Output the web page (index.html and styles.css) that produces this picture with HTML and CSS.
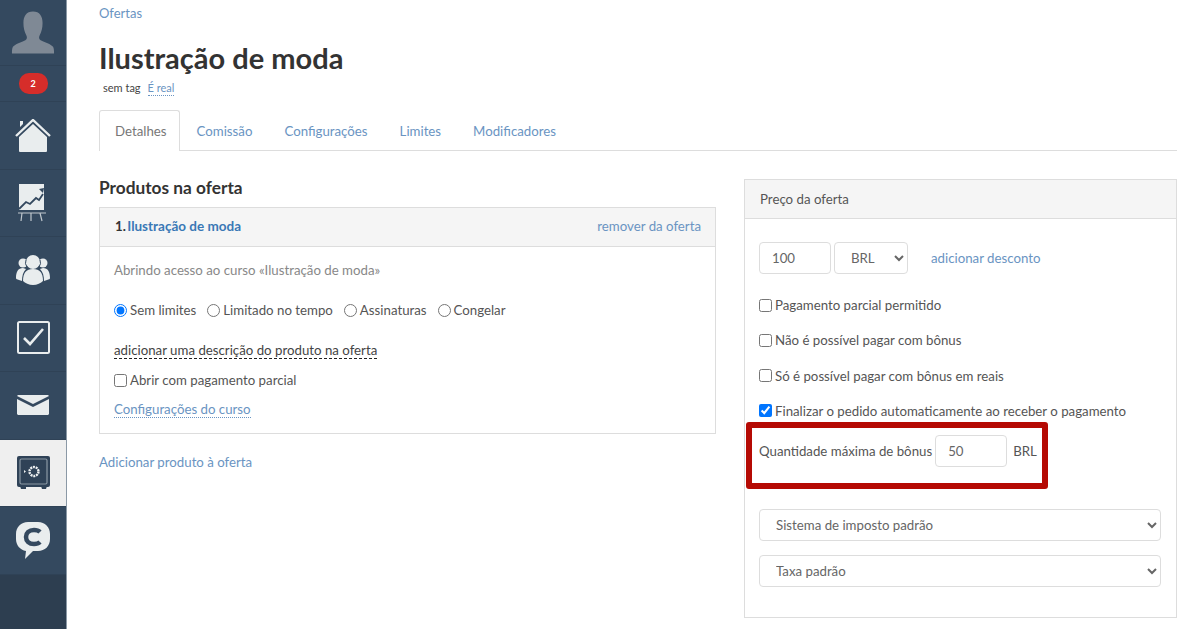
FILE: index.html
```html
<!DOCTYPE html>
<html lang="pt">
<head>
  <meta charset="UTF-8" />
  <meta name="viewport" content="width=device-width, initial-scale=1.0"/>
  <title>Ilustração de moda</title>
  <link rel="stylesheet" href="styles.css">
</head>
<body>

  <nav class="sidebar">
    <a class="side-item side-avatar">
      <svg width="44" height="43" viewBox="0 0 46 44"><path fill="#7f8995" d="M23 0c7 0 10 5 10 12 0 5-1 9-3 13-1 2-1 4 1 5 4 2 11 4 13 7 1 2 1 5 1 7H1c0-2 0-5 1-7 2-3 9-5 13-7 2-1 2-3 1-5-2-4-3-8-3-13C13 5 16 0 23 0z"/></svg>
    </a>
    <a class="side-item side-badge"><span class="badge">2</span></a>
    <a class="side-item">
      <svg width="36" height="33" viewBox="0 0 36 33"><path fill="#e9edee" d="M5 2h3v3L5 8zM18 5 32 18v14a1 1 0 0 1-1 1H5a1 1 0 0 1-1-1V18z"/><path fill="none" stroke="#e9edee" stroke-width="2.4" d="M1 17 18 1l17 16"/></svg>
    </a>
    <a class="side-item">
      <svg width="30" height="38" viewBox="0 0 30 38"><path fill="#e9edee" d="M1 0h25v26H1z"/><path fill="none" stroke="#34495f" stroke-width="1.8" d="M1 25l7-7 4 2 6-6 3 2 4-6"/><path fill="#34495f" d="M21 5l5-1-1 5z"/><path fill="none" stroke="#bfc7cd" stroke-width="1.2" d="M0 29h28M4 29l-1 8M13 29v8M22 29l2 8"/></svg>
    </a>
    <a class="side-item">
      <svg width="34" height="30" viewBox="0 0 34 30"><g fill="#e9edee"><circle cx="7" cy="8" r="4.5"/><circle cx="27" cy="8" r="4.5"/><path d="M0 23c0-6 2-10 7-10l3 1c-3 3-4 7-4 12l-3-1c-2-.5-3-1-3-2zM34 23c0-6-2-10-7-10l-3 1c3 3 4 7 4 12l3-1c2-.5 3-1 3-2z"/><circle cx="17" cy="7" r="7"/><path d="M7 26c0-8 3-12 10-12s10 4 10 12c-2 2-6 4-10 4s-8-2-10-4z"/></g><path fill="none" stroke="#34495f" stroke-width="1" d="M10 5a7 7 0 0 0 1 7M24 5a7 7 0 0 1-1 7"/></svg>
    </a>
    <a class="side-item">
      <svg width="33" height="33" viewBox="0 0 33 33"><rect x="1" y="1" width="31" height="31" rx="1.5" fill="none" stroke="#e9edee" stroke-width="2"/><path fill="none" stroke="#e9edee" stroke-width="2.6" d="M7 17l6 6L26 8"/></svg>
    </a>
    <a class="side-item">
      <svg width="32" height="20" viewBox="0 0 32 20"><path fill="#e9edee" d="M0 1 1 0h30l1 1-16 8zM0 4l16 8 16-8v15l-1 1H1l-1-1z"/></svg>
    </a>
    <a class="side-item side-active">
      <svg width="33" height="33" viewBox="0 0 33 33"><rect y="0" width="33" height="31" rx="2" fill="#2f4257"/><path fill="#2f4257" d="M3 30h6v3H4zM24 30h6l-1 3h-4z"/><rect x="3" y="3" width="27" height="25" rx="1.5" fill="none" stroke="#8b98a4" stroke-width="1.2"/><circle cx="17" cy="15.5" r="4.5" fill="none" stroke="#eef0f1" stroke-width="2.4" stroke-dasharray="2 .8"/><path fill="#eef0f1" d="M7 14l2 1.5-2 1.5z"/></svg>
    </a>
    <a class="side-item">
      <svg width="34" height="37" viewBox="0 0 34 37"><path fill="#e9edee" d="M12 0h10c7 0 12 5 12 12v5c0 7-5 12-12 12h-5l-8 8 1-8c-6-1-10-6-10-12V12C0 5 5 0 12 0z"/><path fill="none" stroke="#34495f" stroke-width="4.5" d="M24 10c-1-1-3-2-6-2-5 0-8 3-8 7s3 7 8 7c3 0 5-1 6-2"/></svg>
    </a>
  </nav>

  <main class="content">
    <a class="crumb">Ofertas</a>
    <h1>Ilustração de moda</h1>
    <div class="tags">
      <span class="tag-none">sem tag</span>
      <a class="tag-real">É real</a>
    </div>

    <div class="tabs">
      <a class="tab active">Detalhes</a>
      <a class="tab">Comissão</a>
      <a class="tab">Configurações</a>
      <a class="tab">Limites</a>
      <a class="tab">Modificadores</a>
    </div>

    <div class="columns">
      <section class="col-left">
        <h2>Produtos na oferta</h2>
        <div class="panel">
          <div class="panel-head product-head">
            <span><b>1.</b> <a class="product-name">Ilustração de moda</a></span>
            <a class="link">remover da oferta</a>
          </div>
          <div class="product-body">
            <p class="muted">Abrindo acesso ao curso «Ilustração de moda»</p>
            <div class="radios">
              <label><input type="radio" name="limit" checked>Sem limites</label>
              <label><input type="radio" name="limit">Limitado no tempo</label>
              <label><input type="radio" name="limit">Assinaturas</label>
              <label><input type="radio" name="limit">Congelar</label>
            </div>
            <a class="add-desc">adicionar uma descrição do produto na oferta</a>
            <label class="check check-partial"><input type="checkbox">Abrir com pagamento parcial</label>
            <a class="link course-link">Configurações do curso</a>
          </div>
        </div>
        <a class="link add-product">Adicionar produto à oferta</a>
      </section>

      <aside class="panel price-panel">
        <div class="panel-head">Preço da oferta</div>
        <div class="price-body">
          <div class="price-row">
            <input class="field field-small" type="text" value="100">
            <select class="field field-currency"><option>BRL</option></select>
            <a class="link discount">adicionar desconto</a>
          </div>
          <label class="check"><input type="checkbox">Pagamento parcial permitido</label>
          <label class="check"><input type="checkbox">Não é possível pagar com bônus</label>
          <label class="check"><input type="checkbox">Só é possível pagar com bônus em reais</label>
          <label class="check"><input type="checkbox" checked>Finalizar o pedido automaticamente ao receber o pagamento</label>
          <div class="bonus-row">
            <span>Quantidade máxima de bônus</span>
            <input class="field field-small" type="text" value="50">
            <span class="bonus-cur">BRL</span>
          </div>
          <select class="field field-wide"><option>Sistema de imposto padrão</option></select>
          <select class="field field-wide"><option>Taxa padrão</option></select>
        </div>
        <div class="highlight"></div>
      </aside>
    </div>
  </main>

</body>
</html>
```

FILE: styles.css
```css
* {
  box-sizing: border-box;
  margin: 0;
  padding: 0;
}

html, body {
  height: 100%;
  overflow: hidden;
}

body {
  display: flex;
  background: #fff;
  color: #555;
  font-family: 'Lato', 'Open Sans', sans-serif;
  font-size: 13.25px;
}

a {
  color: #6a94c2;
}

/* sidebar */
.sidebar {
  flex: 0 0 67px;
  background: #2d3e50;
  border-right: 1px solid #8b99a6;
}

.side-item {
  display: flex;
  align-items: center;
  justify-content: center;
  height: 67.5px;
  background: #34495f;
  border-bottom: 1px solid #2f4256;
}

.side-avatar {
  height: 66px;
}

.side-badge {
  height: 36px;
}

.side-active {
  background: #efefef;
}

.badge {
  width: 29px;
  height: 21px;
  border-radius: 10px;
  background: #d62d2a;
  color: #fff;
  font-size: 9px;
  font-weight: 700;
  line-height: 21px;
  text-align: center;
}

/* page head */
.content {
  flex: 1;
  min-width: 0;
  padding: 4px 23px 0 32px;
}

.crumb {
  display: block;
  font-size: 13px;
  line-height: 18px;
}

h1 {
  margin-top: 20px;
  color: #333;
  font-size: 29px;
  font-weight: 700;
  line-height: 32px;
}

.tags {
  display: flex;
  gap: 7px;
  margin-top: 6px;
  padding-left: 4px;
  font-size: 11px;
  line-height: 15px;
}

.tag-none {
  color: #444;
}

.tag-real {
  border-bottom: 1px dotted #6a94c2;
}

.tabs {
  display: flex;
  margin-top: 14px;
  height: 41px;
  border-bottom: 1px solid #ddd;
}

.tab {
  height: 41px;
  padding: 0 15px;
  border: 1px solid transparent;
  border-bottom: 0;
  font-size: 13.25px;
  line-height: 41px;
}

.tab.active {
  margin-right: 1px;
  padding: 0 12px 0 15px;
  border-color: #ddd;
  border-radius: 3px 3px 0 0;
  background: #fff;
  color: #777;
}

/* columns */
.columns {
  display: flex;
  gap: 28px;
  margin-top: 28px;
}

.col-left {
  flex: 0 0 617px;
}

h2 {
  color: #333;
  font-size: 17.3px;
  font-weight: 700;
  line-height: 18px;
  margin-bottom: 10px;
}

.panel {
  border: 1px solid #ddd;
}

.panel-head {
  height: 39px;
  padding: 0 15px;
  background: #f5f5f5;
  border-bottom: 1px solid #ddd;
  line-height: 38px;
}

.product-head {
  display: flex;
  justify-content: space-between;
  padding-right: 14px;
  line-height: 37px;
}

.product-head b {
  margin-right: -2px;
  color: #333;
}

.product-name {
  color: #3a78b5;
  font-size: 13.5px;
  font-weight: 700;
}

.product-body {
  padding: 15px 14px 15px;
}

.muted {
  color: #888;
  line-height: 16px;
}

.radios {
  display: flex;
  gap: 11px;
  margin-top: 24px;
  line-height: 16px;
}

.radios label {
  display: flex;
  align-items: center;
}

.radios input {
  width: 13px;
  height: 13px;
  margin-right: 3px;
}

.add-desc {
  display: inline-block;
  margin-top: 25px;
  color: #444;
  border-bottom: 1px dashed #222;
  line-height: 15px;
}

.check {
  display: flex;
  align-items: center;
  line-height: 16px;
}

.check input {
  width: 13px;
  height: 13px;
  margin-right: 3px;
}

.check-partial {
  margin-top: 13px;
}

.course-link {
  display: inline-block;
  margin-top: 14px;
  border-bottom: 1px dotted #6a94c2;
  line-height: 15px;
}

.add-product {
  display: block;
  margin-top: 20px;
  line-height: 16px;
}

/* price panel */
.price-panel {
  position: relative;
  flex: 1;
  height: 439px;
}

.price-body {
  padding: 23px 14px 0;
}

.price-row {
  display: flex;
  align-items: center;
  margin-bottom: 23px;
}

.field {
  height: 32px;
  border: 1px solid #ddd;
  border-radius: 4px;
  background: #fff;
  color: #666;
  font-family: inherit;
  font-size: 13.25px;
}

.field-small {
  width: 72px;
  padding-left: 12px;
}

.field-currency {
  width: 74px;
  margin-left: 3px;
  padding-left: 12px;
}

.discount {
  margin-left: 23px;
}

.price-body .check {
  margin-bottom: 19.3px;
}

.price-body .check:nth-of-type(4) {
  margin-bottom: 0;
}

.bonus-row {
  display: flex;
  align-items: center;
  gap: 3px;
  margin-top: 16px;
  margin-bottom: 42.5px;
}

.bonus-cur {
  margin-left: 3px;
}

.field-wide {
  display: block;
  width: 402px;
  margin-bottom: 14px;
  padding-left: 12px;
}

.highlight {
  position: absolute;
  left: 1px;
  top: 242px;
  width: 302px;
  height: 67px;
  border: 6px solid #b50a04;
  border-radius: 3px;
}
```
